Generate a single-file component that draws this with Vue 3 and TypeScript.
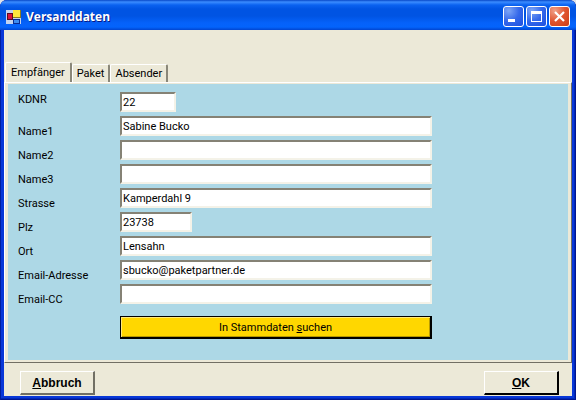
<script setup lang="ts">
import { reactive, ref } from 'vue'

interface Field {
  id: string
  label: string
  size: 'tiny' | 'short' | 'full'
}

const tabs: string[] = ['Empfänger', 'Paket', 'Absender']
const activeTab = ref<string>('Empfänger')

const fields: Field[] = [
  { id: 'kdnr', label: 'KDNR', size: 'tiny' },
  { id: 'name1', label: 'Name1', size: 'full' },
  { id: 'name2', label: 'Name2', size: 'full' },
  { id: 'name3', label: 'Name3', size: 'full' },
  { id: 'strasse', label: 'Strasse', size: 'full' },
  { id: 'plz', label: 'Plz', size: 'short' },
  { id: 'ort', label: 'Ort', size: 'full' },
  { id: 'email', label: 'Email-Adresse', size: 'full' },
  { id: 'emailcc', label: 'Email-CC', size: 'full' },
]

const values = reactive<Record<string, string>>({
  kdnr: '22',
  name1: 'Sabine Bucko',
  name2: '',
  name3: '',
  strasse: 'Kamperdahl 9',
  plz: '23738',
  ort: 'Lensahn',
  email: 'sbucko@paketpartner.de',
  emailcc: '',
})
</script>

<template>
  <main class="window">
    <header class="titlebar">
      <svg class="app-icon" width="16" height="16" viewBox="0 0 16 16" aria-hidden="true">
        <rect x="0" y="1" width="15" height="14" fill="#c3d3ee" />
        <rect x="1" y="4" width="6" height="7" fill="#5c0a20" />
        <rect x="2" y="5" width="4" height="5" fill="#d8143c" />
        <rect x="7" y="1" width="8" height="8" fill="#8a7a20" />
        <rect x="7" y="1" width="7" height="7" fill="#ffe83c" />
        <rect x="7" y="10" width="7" height="5" fill="#0a2a90" />
        <rect x="8" y="11" width="5" height="3" fill="#3c8cf0" />
      </svg>
      <h1 class="title">Versanddaten</h1>
      <div class="caption-buttons">
        <button type="button" class="caption" aria-label="Minimieren">
          <svg width="19" height="19" viewBox="0 0 19 19"><rect x="4" y="12" width="7" height="3" fill="#fff" /></svg>
        </button>
        <button type="button" class="caption" aria-label="Maximieren">
          <svg width="19" height="19" viewBox="0 0 19 19"><path d="M4 4h11v11H4zM5 7v7h9V7z" fill="#fff" fill-rule="evenodd" /></svg>
        </button>
        <button type="button" class="caption close" aria-label="Schließen">
          <svg width="19" height="19" viewBox="0 0 19 19"><path d="M5 5l9 9M14 5l-9 9" stroke="#fff" stroke-width="2.2" /></svg>
        </button>
      </div>
    </header>

    <form class="client" @submit.prevent>
      <div class="tabs" role="tablist">
        <button
          v-for="tab in tabs"
          :key="tab"
          type="button"
          role="tab"
          class="tab"
          :class="{ active: tab === activeTab }"
          :aria-selected="tab === activeTab"
          @click="activeTab = tab"
        >{{ tab }}</button>
      </div>

      <section class="panel" role="tabpanel">
        <div class="sheet">
          <div v-for="field in fields" :key="field.id" class="row">
            <label :for="field.id">{{ field.label }}</label>
            <input :id="field.id" v-model="values[field.id]" type="text" :class="field.size" />
          </div>
          <div class="row search-row">
            <button type="button" class="search">In Stammdaten <u>s</u>uchen</button>
          </div>
        </div>
      </section>

      <footer class="footer">
        <button type="button" class="action"><u>A</u>bbruch</button>
        <button type="submit" class="action ok"><u>O</u>K</button>
      </footer>
    </form>
  </main>
</template>

<style>
body {
  margin: 0;
  background: #dfe3ea;
}
</style>

<style scoped>
* {
  box-sizing: border-box;
}

.window {
  display: flex;
  flex-direction: column;
  min-height: 100vh;
  padding: 0 4px 4px;
  border-radius: 7px 7px 0 0;
  background: #0837d8;
  box-shadow: inset 1px 0 #001ea0, inset -1px -1px #001590, inset -2px -2px #0028b8;
  font-family: Roboto, "Liberation Sans", Arial, sans-serif;
  font-size: 11px;
  color: #000;
}

button,
input {
  font: inherit;
  color: inherit;
}

.titlebar {
  display: flex;
  align-items: center;
  height: 30px;
  margin: 0 -4px;
  padding: 3px 6px 0;
  border-radius: 7px 7px 0 0;
  background: linear-gradient(#0848c8 0, #3b8cff 2px, #0a62f0 5px, #0054e3 9px, #0054e3 16px, #0562fa 23px, #0364fc 27px, #0145d0 30px);
}

.title {
  flex: 1;
  margin: 0 0 0 4px;
  font: bold 12px/18px "Open Sans", "Noto Sans", sans-serif;
  color: #fff;
  text-shadow: 1px 1px #0a1883;
}

.caption-buttons {
  display: flex;
  gap: 2px;
}

.caption {
  width: 21px;
  height: 21px;
  padding: 0;
  border: 1px solid #fff;
  border-radius: 3px;
  background: radial-gradient(circle at 25% 20%, #7da6f6, #3468ea 50%, #1c4fe0);
}

.caption.close {
  background: radial-gradient(circle at 25% 20%, #f0a088, #e05530 50%, #cc3c14);
}

.caption svg {
  display: block;
}

.client {
  flex: 1;
  display: flex;
  flex-direction: column;
  padding-top: 32px;
  background: #ece9d8;
}

.tabs {
  display: flex;
  align-items: flex-end;
  height: 20px;
  padding-left: 1px;
}

.tab {
  height: 18px;
  padding: 0 4px;
  border: 0;
  border-top: 1px solid #fff;
  border-left: 1px solid #fff;
  border-right: 2px solid #8a8779;
  border-radius: 2px 2px 0 0;
  background: #ece9d8;
  line-height: 18px;
}

.tab.active {
  height: 20px;
  padding: 0 5px;
}

.panel {
  flex: 1;
  display: flex;
  padding: 1px 3px 2px;
  border: 1px solid;
  border-color: #fff #716f64 #716f64 #fff;
}

.sheet {
  flex: 1;
  padding: 8px 10px 20px;
  background: #add8e6;
}

.row {
  display: grid;
  grid-template-columns: 102px minmax(0, 312px);
  height: 24px;
}

.row label {
  align-self: end;
  line-height: 16px;
}

.row:first-child label {
  align-self: start;
}

.row input {
  height: 20px;
  padding: 0 1px;
  border: 2px solid;
  border-color: #858275 #f4f2e8 #f4f2e8 #858275;
  border-radius: 0;
  background: #fff;
  outline: none;
}

.row .tiny {
  width: 56px;
}

.row .short {
  width: 72px;
}

.row .full {
  width: 100%;
}

.search-row {
  margin-top: 8px;
}

.search {
  grid-column: 2;
  height: 23px;
  padding: 0;
  border: solid #000;
  border-width: 1px 2px 2px 1px;
  background: #ffd700;
  box-shadow: inset 1px 1px #ffe97a, inset -1px -1px #b89a00;
}

.footer {
  display: flex;
  justify-content: space-between;
  padding: 8px 13px 1px 16px;
}

.action {
  width: 75px;
  height: 24px;
  padding: 0;
  border: solid;
  border-width: 1px 2px 2px 1px;
  border-color: #fff #716f64 #716f64 #fff;
  background: #ece9d8;
  font-family: "Liberation Sans", Arial, sans-serif;
  font-size: 12px;
  font-weight: bold;
}

.action.ok {
  border-color: #fff #000 #000 #fff;
}
</style>
